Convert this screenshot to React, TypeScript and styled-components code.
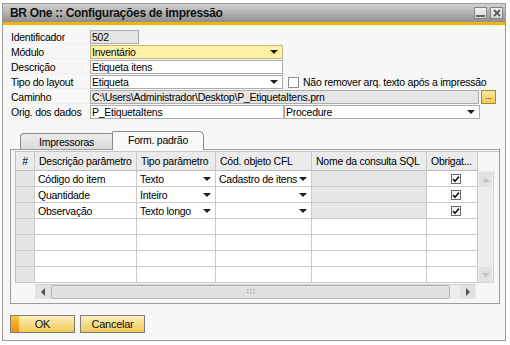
import React from "react";
import styled, { createGlobalStyle } from "styled-components";

const GlobalStyle = createGlobalStyle`
  html, body { margin: 0; padding: 0; background: #ffffff; }
  body {
    font-family: "Liberation Sans", Arial, sans-serif;
    font-size: 10.5px;
    letter-spacing: -0.25px;
    color: #000;
  }
  * { box-sizing: border-box; }
`;

const Window = styled.div`
  margin: 3px 0 0 2px;
  width: 504px;
  height: 338px;
  border: 1px solid #9c9c9c;
  background: #f7f7f7;
  display: flex;
  flex-direction: column;
`;

const TitleBar = styled.div`
  height: 21px;
  flex: none;
  display: flex;
  align-items: center;
  padding: 0 2px 0 7px;
  background: linear-gradient(#d2d2d2, #8f8f8f);
  border-bottom: 3px solid #f5b400;
`;

const TitleText = styled.div`
  font-weight: bold;
  font-size: 12px;
  letter-spacing: -0.3px;
  color: #111;
`;

const TitleButtons = styled.div`
  margin-left: auto;
  display: flex;
  gap: 3px;
`;

const TitleButton = styled.div`
  width: 13px;
  height: 12px;
  border: 1px solid #858585;
  background: linear-gradient(#f2f2f2, #d4d4d4);
  display: flex;
  align-items: center;
  justify-content: center;
`;

const Body = styled.div`
  flex: 1;
  padding: 5px 5px 0 7px;
  display: flex;
  flex-direction: column;
`;

const Form = styled.div`
  display: flex;
  flex-direction: column;
  gap: 1px;
`;

const Row = styled.div`
  height: 14px;
  display: flex;
  align-items: center;
`;

const Label = styled.div`
  width: 80px;
  height: 14px;
  padding-left: 1px;
  line-height: 14px;
  white-space: nowrap;
  border-bottom: 1px solid #efefef;
`;

type FieldKind = "white" | "grey" | "yellow";
const fieldBg: Record<FieldKind, string> = {
  white: "#ffffff",
  grey: "#e5e5e5",
  yellow: "#fff2a6",
};

const Field = styled.div<{ $w: number; $kind?: FieldKind }>`
  width: ${(p) => p.$w}px;
  height: 14px;
  flex: none;
  border: 1px solid ${(p) => (p.$kind === "yellow" ? "#c2b47a" : "#acacac")};
  background: ${(p) => fieldBg[p.$kind || "white"]};
  padding: 0 4px 0 1px;
  display: flex;
  align-items: center;
  justify-content: space-between;
  white-space: nowrap;
  overflow: hidden;
`;

const CheckBox = styled.div`
  width: 11px;
  height: 11px;
  flex: none;
  margin: 0 4px 0 5px;
  border: 1px solid #8e8e8e;
  background: #fff;
`;

const DotsButton = styled.div`
  width: 15px;
  height: 14px;
  margin-left: 2px;
  border: 1px solid #a08a3c;
  background: linear-gradient(#fbe9a0, #f2c94a);
  display: flex;
  align-items: center;
  justify-content: center;
  font-size: 9px;
  line-height: 8px;
  padding-bottom: 2px;
  color: #222;
`;

const TabStrip = styled.div`
  margin-top: 12px;
  height: 18px;
  padding-left: 10px;
  display: flex;
  align-items: flex-end;
  position: relative;
  z-index: 1;
`;

const Tab = styled.div<{ $active?: boolean }>`
  width: ${(p) => (p.$active ? 92 : 93)}px;
  height: ${(p) => (p.$active ? 19 : 16)}px;
  margin-bottom: ${(p) => (p.$active ? -1 : 0)}px;
  margin-left: ${(p) => (p.$active ? -1 : 0)}px;
  border: 1px solid #8c8c8c;
  border-bottom: none;
  border-radius: ${(p) => (p.$active ? "2px 5px 0 0" : "4px 2px 0 0")};
  background: ${(p) =>
    p.$active ? "#f8f8f8" : "linear-gradient(#ececec, #dadada)"};
  display: flex;
  align-items: center;
  justify-content: center;
  padding-bottom: ${(p) => (p.$active ? 2 : 0)}px;
`;

const Panel = styled.div`
  width: 490px;
  height: 155px;
  border: 1px solid #9c9c9c;
  padding: 1px 0 0 4px;
  display: flex;
  flex-direction: column;
`;

const COLS = [19, 102, 79, 96, 115, 51];

const GridRow = styled.div<{ $header?: boolean }>`
  display: flex;
  height: ${(p) => (p.$header ? 20 : 16)}px;
  border-left: 1px solid #bdbdbd;
  ${(p) => (p.$header ? "border-top: 1px solid #c4c4c4;" : "")}
`;

type CellKind = "head" | "rowhead" | "grey" | "white";
const cellBg: Record<CellKind, string> = {
  head: "#ebebeb",
  rowhead: "#e4e4e4",
  grey: "#e6e6e6",
  white: "#ffffff",
};

const Cell = styled.div<{ $w: number; $kind: CellKind; $center?: boolean }>`
  width: ${(p) => p.$w}px;
  flex: none;
  height: 100%;
  background: ${(p) => cellBg[p.$kind]};
  border-right: 1px solid ${(p) => (p.$kind === "head" ? "#c8c8c8" : "#cbcbcb")};
  border-bottom: 1px solid ${(p) => (p.$kind === "head" ? "#bdbdbd" : "#cbcbcb")};
  padding: 0 4px 0 ${(p) => (p.$kind === "head" ? 4 : 3)}px;
  display: flex;
  align-items: center;
  justify-content: ${(p) => (p.$center ? "center" : "space-between")};
  white-space: nowrap;
  overflow: hidden;
`;

const CheckCell = styled(Cell)`
  justify-content: flex-start;
  padding-left: 24px;
`;

const GridCheck = styled.div`
  width: 10px;
  height: 10px;
  border: 1px solid #6a6a6a;
  background: #fff;
  display: flex;
  align-items: center;
  justify-content: center;
`;

const BodyArea = styled.div`
  display: flex;
`;

const Rows = styled.div`
  display: flex;
  flex-direction: column;
`;

const VScroll = styled.div`
  width: 16px;
  height: 112px;
  background: #ededed;
  border-right: 1px solid #d6d6d6;
  border-bottom: 1px solid #d6d6d6;
  display: flex;
  flex-direction: column;
  justify-content: space-between;
  padding: 1px 1px 0 1px;
`;

const ScrollBtn = styled.div<{ $w: number; $h: number }>`
  width: ${(p) => p.$w}px;
  height: ${(p) => p.$h}px;
  flex: none;
  background: #e2e2e2;
  display: flex;
  align-items: center;
  justify-content: center;
`;

const HScroll = styled.div`
  margin: 1px 0 0 20px;
  width: 441px;
  height: 15px;
  background: #ededed;
  border-top: 1px solid #d2d2d2;
  display: flex;
  align-items: stretch;
`;

const Thumb = styled.div`
  width: 399px;
  background: #e2e2e2;
  border: 1px solid #b4b4b4;
  border-radius: 2px;
  display: flex;
  align-items: center;
  justify-content: center;
  margin-right: 10px;
`;

const Footer = styled.div`
  margin-top: 11px;
  display: flex;
  gap: 5px;
`;

const Button = styled.div<{ $primary?: boolean }>`
  width: 65px;
  height: 18px;
  border: 1px solid #7c7c7c;
  background: ${(p) =>
    p.$primary
      ? "linear-gradient(#fac63a, #ec8e12) left / 8px 100% no-repeat, linear-gradient(#fcefc0, #f1ca52)"
      : "linear-gradient(#fcefc0, #f1ca52)"};
  display: flex;
  align-items: center;
  justify-content: center;
  font-size: 11px;
  color: #111;
`;

const Arrow = ({ dir = "down", color = "#1e1e1e" }: { dir?: "down" | "up" | "left" | "right"; color?: string }) => {
  if (dir === "down")
    return (
      <svg width="8" height="4" viewBox="0 0 8 4" style={{ flex: "none" }}>
        <polygon points="0,0 8,0 4,4" fill={color} />
      </svg>
    );
  if (dir === "up")
    return (
      <svg width="8" height="4" viewBox="0 0 8 4">
        <polygon points="0,4 8,4 4,0" fill={color} />
      </svg>
    );
  if (dir === "left")
    return (
      <svg width="4" height="8" viewBox="0 0 4 8">
        <polygon points="4,0 4,8 0,4" fill={color} />
      </svg>
    );
  return (
    <svg width="4" height="8" viewBox="0 0 4 8">
      <polygon points="0,0 0,8 4,4" fill={color} />
    </svg>
  );
};

const Check = () => (
  <svg width="8" height="8" viewBox="0 0 8 8">
    <path d="M1 4 L3 6.3 L7 1.5" stroke="#111" strokeWidth="1.6" fill="none" />
  </svg>
);

const Grip = () => (
  <svg width="8" height="6" viewBox="0 0 8 6">
    {[0, 3, 6].map((x) =>
      [0, 3].map((y) => <rect key={`${x}-${y}`} x={x} y={y} width="1.5" height="1.5" fill="#a8a8a8" />)
    )}
  </svg>
);

type DataRow = { desc: string; tipo: string; cfl: string; filled: boolean };
const data: DataRow[] = [
  { desc: "Código do item", tipo: "Texto", cfl: "Cadastro de itens", filled: true },
  { desc: "Quantidade", tipo: "Inteiro", cfl: "", filled: true },
  { desc: "Observação", tipo: "Texto longo", cfl: "", filled: true },
  { desc: "", tipo: "", cfl: "", filled: false },
  { desc: "", tipo: "", cfl: "", filled: false },
  { desc: "", tipo: "", cfl: "", filled: false },
  { desc: "", tipo: "", cfl: "", filled: false },
];

const headers = ["#", "Descrição parâmetro", "Tipo parâmetro", "Cód. objeto CFL", "Nome da consulta SQL", "Obrigat..."];

export default function App() {
  return (
    <>
      <GlobalStyle />
      <Window>
        <TitleBar>
          <TitleText>BR One :: Configurações de impressão</TitleText>
          <TitleButtons>
            <TitleButton>
              <svg width="9" height="8" viewBox="0 0 9 8">
                <rect x="0" y="6" width="9" height="2" fill="#666" />
              </svg>
            </TitleButton>
            <TitleButton>
              <svg width="8" height="8" viewBox="0 0 8 8">
                <path d="M1 1 L7 7 M7 1 L1 7" stroke="#5c5c5c" strokeWidth="1.8" />
              </svg>
            </TitleButton>
          </TitleButtons>
        </TitleBar>
        <Body>
          <Form>
            <Row>
              <Label>Identificador</Label>
              <Field $w={49} $kind="grey">502</Field>
            </Row>
            <Row>
              <Label>Módulo</Label>
              <Field $w={193} $kind="yellow">
                <span>Inventário</span>
                <Arrow />
              </Field>
            </Row>
            <Row>
              <Label>Descrição</Label>
              <Field $w={193}>Etiqueta itens</Field>
            </Row>
            <Row>
              <Label>Tipo do layout</Label>
              <Field $w={193}>
                <span>Etiqueta</span>
                <Arrow />
              </Field>
              <CheckBox />
              <span>Não remover arq. texto após a impressão</span>
            </Row>
            <Row>
              <Label>Caminho</Label>
              <Field $w={389} $kind="grey">C:\Users\Administrador\Desktop\P_EtiquetaItens.prn</Field>
              <DotsButton>...</DotsButton>
            </Row>
            <Row>
              <Label>Orig. dos dados</Label>
              <Field $w={194}>P_EtiquetaItens</Field>
              <Field $w={196}>
                <span>Procedure</span>
                <Arrow />
              </Field>
            </Row>
          </Form>

          <TabStrip>
            <Tab>Impressoras</Tab>
            <Tab $active>Form. padrão</Tab>
          </TabStrip>
          <Panel>
            <GridRow $header>
              {headers.map((h, i) => (
                <Cell key={h} $w={COLS[i]} $kind="head" $center={i === 0}>
                  {h}
                </Cell>
              ))}
            </GridRow>
            <BodyArea>
              <Rows>
                {data.map((r, idx) => (
                  <GridRow key={idx}>
                    <Cell $w={COLS[0]} $kind="rowhead" />
                    <Cell $w={COLS[1]} $kind="white">{r.desc}</Cell>
                    <Cell $w={COLS[2]} $kind="white">
                      <span>{r.tipo}</span>
                      {r.filled && <Arrow />}
                    </Cell>
                    <Cell $w={COLS[3]} $kind="white">
                      <span>{r.cfl}</span>
                      {r.filled && <Arrow />}
                    </Cell>
                    <Cell $w={COLS[4]} $kind={r.filled ? "grey" : "white"} />
                    <CheckCell $w={COLS[5]} $kind="white">
                      {r.filled && (
                        <GridCheck>
                          <Check />
                        </GridCheck>
                      )}
                    </CheckCell>
                  </GridRow>
                ))}
              </Rows>
              <VScroll>
                <ScrollBtn $w={13} $h={15}>
                  <Arrow dir="up" color="#c2c2c2" />
                </ScrollBtn>
                <ScrollBtn $w={13} $h={15}>
                  <Arrow dir="down" color="#c2c2c2" />
                </ScrollBtn>
              </VScroll>
            </BodyArea>
            <HScroll>
              <ScrollBtn $w={16} $h={14}>
                <Arrow dir="left" color="#505050" />
              </ScrollBtn>
              <Thumb>
                <Grip />
              </Thumb>
              <ScrollBtn $w={15} $h={14}>
                <Arrow dir="right" color="#505050" />
              </ScrollBtn>
            </HScroll>
          </Panel>
          <Footer>
            <Button $primary>OK</Button>
            <Button>Cancelar</Button>
          </Footer>
        </Body>
      </Window>
    </>
  );
}
